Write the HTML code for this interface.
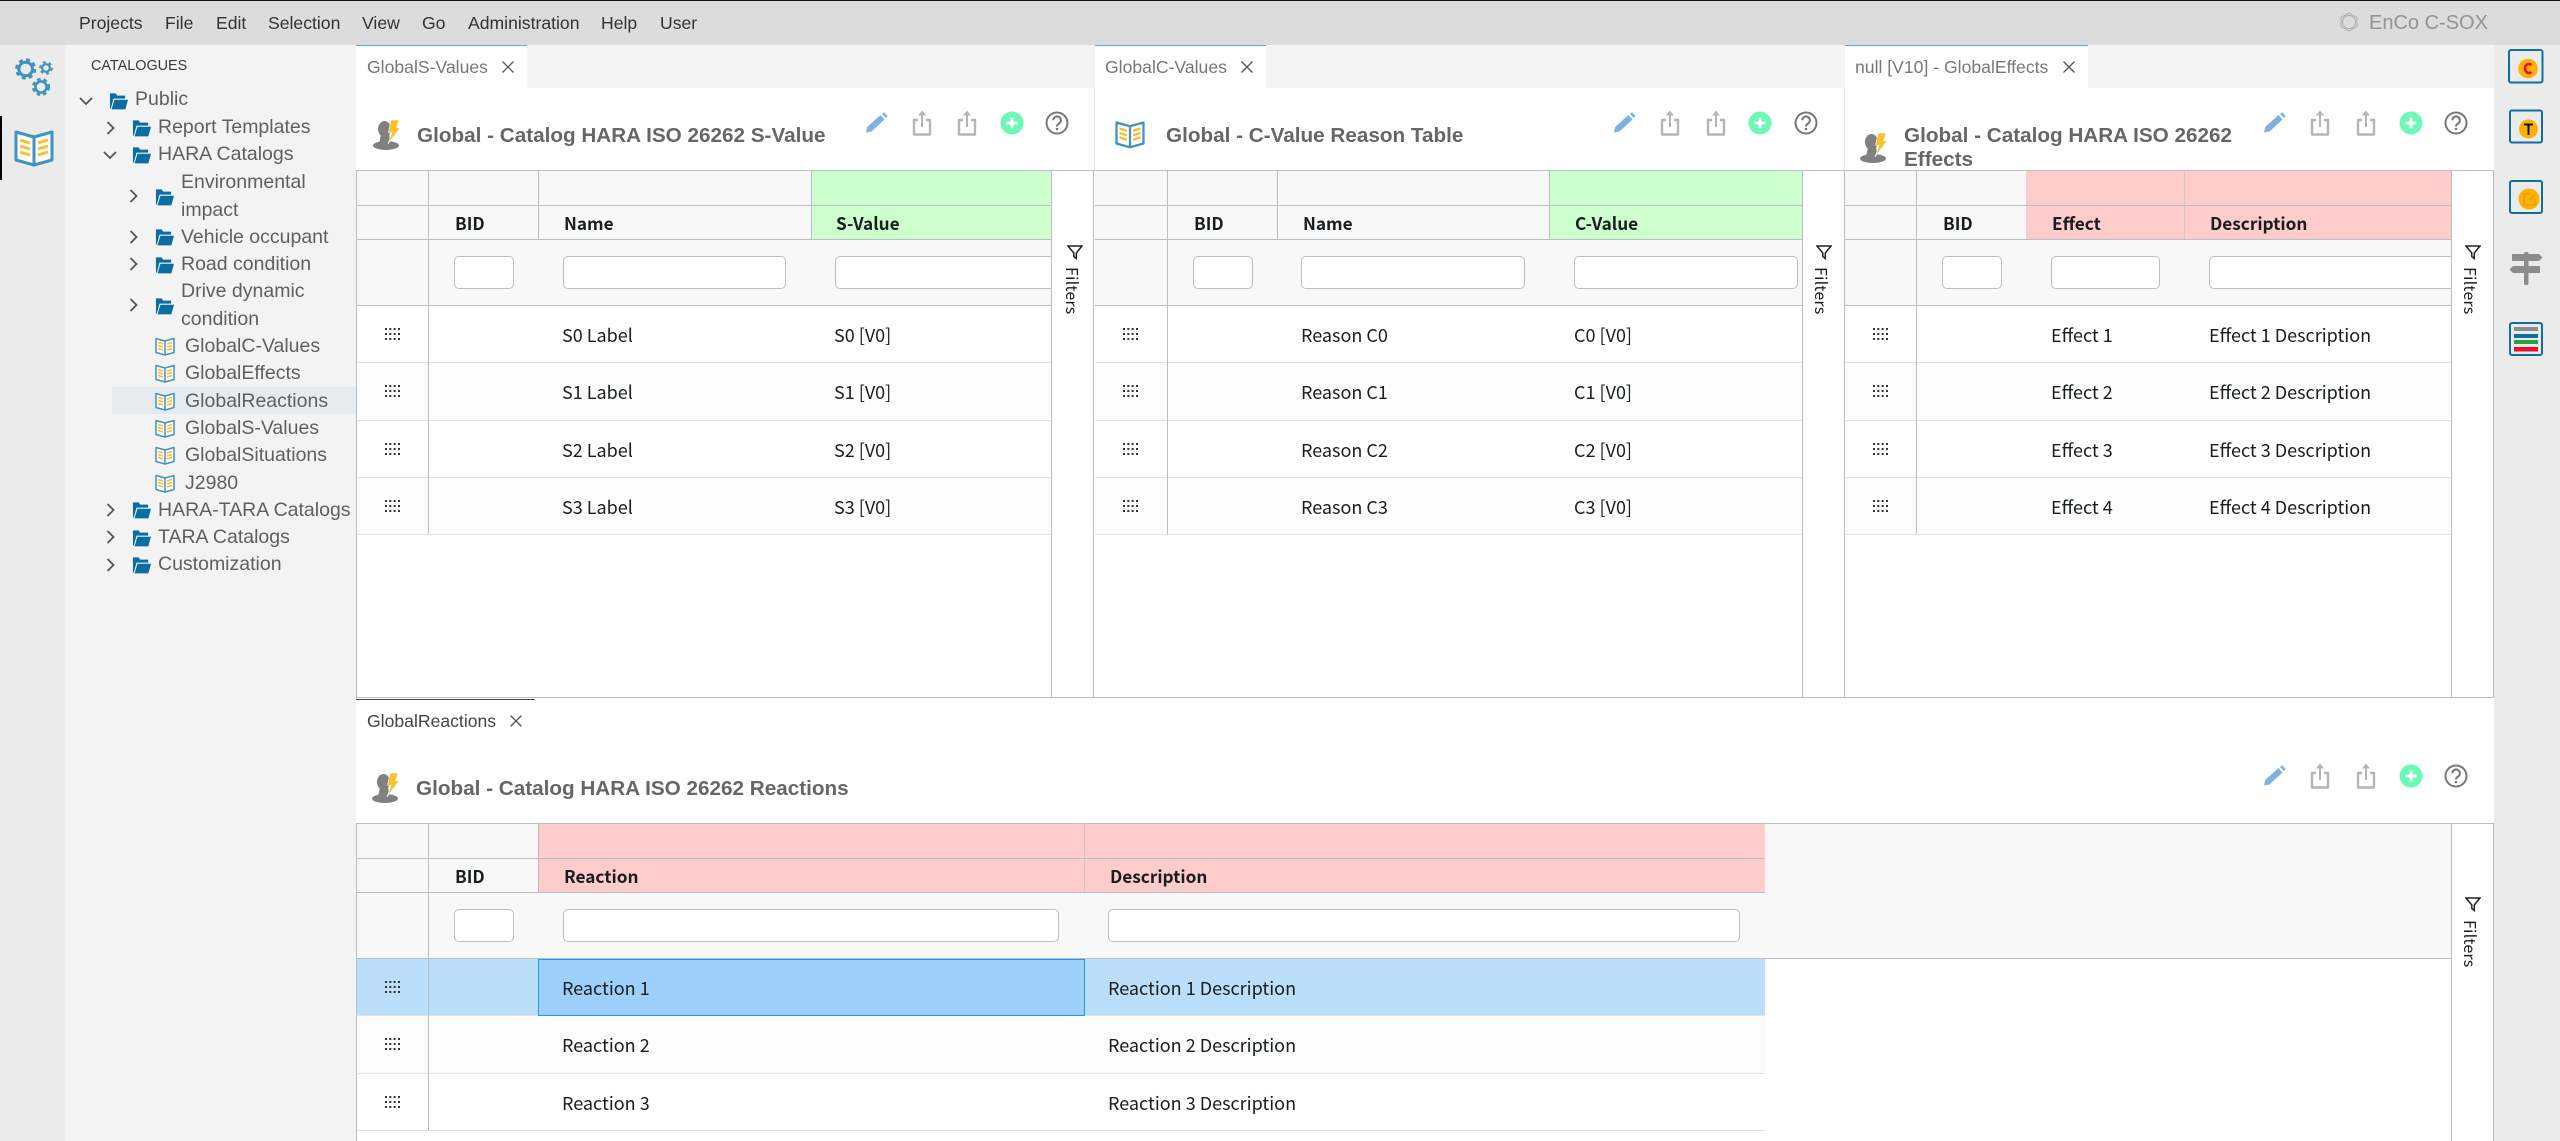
<!DOCTYPE html>
<html><head><meta charset="utf-8"><title>EnCo C-SOX</title>
<style>
html,body{margin:0;padding:0;width:2560px;height:1141px;overflow:hidden;background:#fff}
body{position:relative;font-family:"Liberation Sans",sans-serif}
div,span,svg{position:absolute}
svg{overflow:visible}
.m{top:11px;font-size:17.6px;line-height:24px;color:#333;white-space:nowrap}
.tr{font-size:19.5px;line-height:27px;color:#5f5f5f;white-space:nowrap}
.tb{font-size:17.6px;line-height:24px;color:#777;white-space:nowrap;top:55px}
.ti{font-size:20.7px;line-height:23px;font-weight:bold;color:#666;white-space:nowrap;transform:translateY(1px)}
.c{font-family:"Noto Sans CJK JP",sans-serif;font-size:18px;line-height:24px;color:#181d1f;white-space:nowrap}
.hd{font-family:"Noto Sans CJK JP",sans-serif;font-size:17.2px;line-height:24px;color:#181d1f;font-weight:700;white-space:nowrap;transform:translateY(-1px)}
.l{background:#babfc7}
.r{background:#dde2eb}
.z{background:#fcfcfc}
.i{background:#fff;border:1px solid #babfc7;border-radius:5px;box-sizing:border-box;height:33px}
.f{font-family:"Noto Sans CJK JP",sans-serif;font-size:16px;line-height:20px;color:#181d1f;writing-mode:vertical-rl;white-space:nowrap;letter-spacing:.2px}
</style></head><body>
<svg width="0" height="0" style="left:0;top:0">
<defs>
<symbol id="fo" viewBox="0 0 20 18"><path d="M1 17V1h6l1.600 2.300H17V6.500H4.700L1.900 17Z" fill="#0a6ea3"/><path d="M5.700 7.700H20L17.200 17.800H2.700Z" fill="#0a6ea3"/></symbol>
<symbol id="bk" viewBox="0 0 40 38"><path d="M2 3L20 8V36L2 31ZM38 3L20 8V36L38 31Z" fill="#fff" stroke="#3f93bd" stroke-width="3" stroke-linejoin="round"/><path d="M6 11l10 3M6 17l10 3M6 23l10 3M34 11l-10 3M34 17l-10 3M34 23l-10 3" stroke="#fbbd33" stroke-width="3" fill="none"/></symbol>
<symbol id="rt" viewBox="0 0 10 14"><path d="M1.500 1L7.500 7L1.500 13" fill="none" stroke="#555" stroke-width="1.800"/></symbol>
<symbol id="dn" viewBox="0 0 14 10"><path d="M1 2L7 8L13 2" fill="none" stroke="#555" stroke-width="1.800"/></symbol>
<symbol id="pn" viewBox="0 0 27 30"><ellipse cx="13" cy="25.500" rx="13" ry="4.500" fill="#808080"/><ellipse cx="11.500" cy="9" rx="6.500" ry="8" fill="#808080"/><path d="M8 14H16L18 24H6Z" fill="#808080"/><path d="M18 0H26L23.500 8H27L15 24L19 12.500H15.500Z" fill="#fbc02d" stroke="#fff" stroke-width=".6"/></symbol>
<symbol id="pc" viewBox="0 0 22 21"><path d="M0 20.500L1.200 15L14.500 3L18.500 7.500L5.500 19.500Z" fill="#7eb1e3"/><path d="M16 2L18 .3L21.700 4L19.800 6Z" fill="#7eb1e3"/></symbol>
<symbol id="sh" viewBox="0 0 20 26"><path d="M6 10H2V24.500H18V10H14" fill="none" stroke="#b5b5b5" stroke-width="2.400" stroke-linejoin="round"/><path d="M10 17V2" stroke="#b5b5b5" stroke-width="2" fill="none"/><path d="M6 5.500L10 .5L14 5.500Z" fill="#b5b5b5"/></symbol>
<symbol id="pl" viewBox="0 0 24 24"><circle cx="12" cy="12" r="11.500" fill="#6cf9b6"/><path d="M12 6.500V17.500M6.500 12H17.500" stroke="#fff" stroke-width="2.800"/></symbol>
<symbol id="hp" viewBox="0 0 24 24"><circle cx="12" cy="12" r="10.500" fill="none" stroke="#777" stroke-width="2"/><path d="M8.300 9.300a3.800 3.800 0 1 1 5.800 3.200c-1.500 1-2.100 1.500-2.100 3" fill="none" stroke="#777" stroke-width="2"/><circle cx="12" cy="18" r="1.300" fill="#777"/></symbol>
<symbol id="fn" viewBox="0 0 16 15"><path d="M1 1H15L9.300 8V13.500L6.800 11.500V8Z" fill="none" stroke="#222" stroke-width="1.500"/></symbol>
<symbol id="dg" viewBox="0 0 15 12"><g fill="#333"><rect x="0" y="0" width="2" height="2"/><rect x="4.300" y="0" width="2" height="2"/><rect x="8.600" y="0" width="2" height="2"/><rect x="13" y="0" width="2" height="2"/><rect x="0" y="5" width="2" height="2"/><rect x="4.300" y="5" width="2" height="2"/><rect x="8.600" y="5" width="2" height="2"/><rect x="13" y="5" width="2" height="2"/><rect x="0" y="10" width="2" height="2"/><rect x="4.300" y="10" width="2" height="2"/><rect x="8.600" y="10" width="2" height="2"/><rect x="13" y="10" width="2" height="2"/></g></symbol>
<symbol id="xx" viewBox="0 0 12 12"><path d="M.5 .5L11.500 11.500M11.500 .5L.5 11.500" stroke="#555" stroke-width="1.300" fill="none"/></symbol>
</defs></svg>

<!-- backgrounds -->
<div style="left:0;top:0;width:2560px;height:45px;background:#dcdcdc"></div>
<div style="left:0;top:0;width:2560px;height:1px;background:#111"></div>
<div style="left:0;top:45px;width:65px;height:1096px;background:#ebebeb"></div>
<div style="left:65px;top:45px;width:291px;height:1096px;background:#f3f3f3"></div>
<div style="left:2494px;top:45px;width:66px;height:1096px;background:#ebebeb"></div>
<div style="left:356px;top:45px;width:2138px;height:43px;background:#f3f3f3"></div>
<div style="left:0;top:116px;width:2px;height:64px;background:#000"></div>

<!-- menu -->
<span class="m" style="left:79px">Projects</span>
<span class="m" style="left:165px">File</span>
<span class="m" style="left:216px">Edit</span>
<span class="m" style="left:268px">Selection</span>
<span class="m" style="left:362px">View</span>
<span class="m" style="left:422px">Go</span>
<span class="m" style="left:468px">Administration</span>
<span class="m" style="left:601px">Help</span>
<span class="m" style="left:660px">User</span>
<svg style="left:2339px;top:12px" width="20" height="20" viewBox="0 0 20 20"><path d="M10 1L18 5.500V14.500L10 19L2 14.500V5.500Z" fill="none" stroke="#aaa" stroke-width="1"/><circle cx="10" cy="10" r="6.500" fill="none" stroke="#aaa" stroke-width="1"/></svg>
<span style="left:2369px;top:11px;font-size:20px;line-height:24px;color:#949494;white-space:nowrap">EnCo C-SOX</span>

<!-- left sidebar icons -->
<svg style="left:0;top:45px" width="65" height="60" viewBox="0 45 65 60" fill="none" stroke="#3f93bd">
<circle cx="25.700" cy="69" r="6.800" stroke-width="3"/><circle cx="25.700" cy="69" r="9.300" stroke-width="2.600" stroke-dasharray="4 3.300"/>
<circle cx="46" cy="68" r="3.800" stroke-width="2.200"/><circle cx="46" cy="68" r="5.800" stroke-width="2" stroke-dasharray="3 3"/>
<circle cx="41" cy="87" r="5.600" stroke-width="2.600"/><circle cx="41" cy="87" r="7.900" stroke-width="2.400" stroke-dasharray="3.600 3"/>
</svg>
<svg style="left:14px;top:129px" width="40" height="38"><use href="#bk" width="40" height="38"/></svg>

<!-- tree -->
<span style="left:91px;top:56px;font-size:14.4px;line-height:20px;color:#3a3a3a;white-space:nowrap">CATALOGUES</span>
<div style="left:112px;top:387px;width:244px;height:27px;background:#e6ebf0"></div>
<div style="left:0;top:1px">
<svg style="left:79px;top:95px" width="14" height="10"><use href="#dn" width="14" height="10"/></svg>
<svg style="left:106px;top:120px" width="10" height="14"><use href="#rt" width="10" height="14"/></svg>
<svg style="left:103px;top:149px" width="14" height="10"><use href="#dn" width="14" height="10"/></svg>
<svg style="left:129px;top:188px" width="10" height="14"><use href="#rt" width="10" height="14"/></svg>
<svg style="left:129px;top:229px" width="10" height="14"><use href="#rt" width="10" height="14"/></svg>
<svg style="left:129px;top:256px" width="10" height="14"><use href="#rt" width="10" height="14"/></svg>
<svg style="left:129px;top:297px" width="10" height="14"><use href="#rt" width="10" height="14"/></svg>
<svg style="left:106px;top:502px" width="10" height="14"><use href="#rt" width="10" height="14"/></svg>
<svg style="left:106px;top:529px" width="10" height="14"><use href="#rt" width="10" height="14"/></svg>
<svg style="left:106px;top:557px" width="10" height="14"><use href="#rt" width="10" height="14"/></svg>
<svg style="left:109px;top:91px" width="19" height="18"><use href="#fo" width="19" height="18"/></svg>
<svg style="left:132px;top:118px" width="19" height="18"><use href="#fo" width="19" height="18"/></svg>
<svg style="left:132px;top:145px" width="19" height="18"><use href="#fo" width="19" height="18"/></svg>
<svg style="left:155px;top:187px" width="19" height="18"><use href="#fo" width="19" height="18"/></svg>
<svg style="left:155px;top:227px" width="19" height="18"><use href="#fo" width="19" height="18"/></svg>
<svg style="left:155px;top:255px" width="19" height="18"><use href="#fo" width="19" height="18"/></svg>
<svg style="left:155px;top:296px" width="19" height="18"><use href="#fo" width="19" height="18"/></svg>
<svg style="left:132px;top:500px" width="19" height="18"><use href="#fo" width="19" height="18"/></svg>
<svg style="left:132px;top:528px" width="19" height="18"><use href="#fo" width="19" height="18"/></svg>
<svg style="left:132px;top:555px" width="19" height="18"><use href="#fo" width="19" height="18"/></svg>
<svg style="left:155px;top:336px" width="20" height="19"><use href="#bk" width="20" height="19"/></svg>
<svg style="left:155px;top:363px" width="20" height="19"><use href="#bk" width="20" height="19"/></svg>
<svg style="left:155px;top:391px" width="20" height="19"><use href="#bk" width="20" height="19"/></svg>
<svg style="left:155px;top:418px" width="20" height="19"><use href="#bk" width="20" height="19"/></svg>
<svg style="left:155px;top:445px" width="20" height="19"><use href="#bk" width="20" height="19"/></svg>
<svg style="left:155px;top:473px" width="20" height="19"><use href="#bk" width="20" height="19"/></svg>
<span class="tr" style="left:135px;top:85px">Public</span>
<span class="tr" style="left:158px;top:113px">Report Templates</span>
<span class="tr" style="left:158px;top:140px">HARA Catalogs</span>
<span class="tr" style="left:181px;top:168px">Environmental</span>
<span class="tr" style="left:181px;top:196px">impact</span>
<span class="tr" style="left:181px;top:223px">Vehicle occupant</span>
<span class="tr" style="left:181px;top:250px">Road condition</span>
<span class="tr" style="left:181px;top:277px">Drive dynamic</span>
<span class="tr" style="left:181px;top:305px">condition</span>
<span class="tr" style="left:185px;top:332px">GlobalC-Values</span>
<span class="tr" style="left:185px;top:359px">GlobalEffects</span>
<span class="tr" style="left:185px;top:387px">GlobalReactions</span>
<span class="tr" style="left:185px;top:414px">GlobalS-Values</span>
<span class="tr" style="left:185px;top:441px">GlobalSituations</span>
<span class="tr" style="left:185px;top:469px">J2980</span>
<span class="tr" style="left:158px;top:496px">HARA-TARA Catalogs</span>
<span class="tr" style="left:158px;top:523px">TARA Catalogs</span>
<span class="tr" style="left:158px;top:550px">Customization</span>
</div>

<!-- tabs -->
<div style="left:356px;top:45px;width:171px;height:43px;background:#fff;border-top:1px solid #5aa9e6;box-sizing:border-box"></div>
<div style="left:1095px;top:45px;width:171px;height:43px;background:#fff;border-top:1px solid #5aa9e6;box-sizing:border-box"></div>
<div style="left:1845px;top:45px;width:243px;height:43px;background:#fff;border-top:1px solid #5aa9e6;box-sizing:border-box"></div>
<span class="tb" style="left:367px">GlobalS-Values</span>
<svg style="left:502px;top:61px" width="12" height="12"><use href="#xx" width="12" height="12"/></svg>
<span class="tb" style="left:1105px">GlobalC-Values</span>
<svg style="left:1241px;top:61px" width="12" height="12"><use href="#xx" width="12" height="12"/></svg>
<span class="tb" style="left:1855px">null [V10] - GlobalEffects</span>
<svg style="left:2063px;top:61px" width="12" height="12"><use href="#xx" width="12" height="12"/></svg>
<div style="left:1094px;top:88px;width:1px;height:82px;background:#e4e4e4"></div>
<div style="left:1844px;top:88px;width:1px;height:82px;background:#e4e4e4"></div>

<!-- panel titles -->
<svg style="left:373px;top:120px" width="27" height="30"><use href="#pn" width="27" height="30"/></svg>
<span class="ti" style="left:417px;top:123px">Global - Catalog HARA ISO 26262 S-Value</span>
<svg style="left:1115px;top:120px" width="30" height="29"><use href="#bk" width="30" height="29"/></svg>
<span class="ti" style="left:1166px;top:123px">Global - C-Value Reason Table</span>
<svg style="left:1860px;top:133px" width="27" height="30"><use href="#pn" width="27" height="30"/></svg>
<span class="ti" style="left:1904px;top:123px">Global - Catalog HARA ISO 26262</span>
<span class="ti" style="left:1904px;top:147px">Effects</span>
<svg style="left:372px;top:773px" width="27" height="30"><use href="#pn" width="27" height="30"/></svg>
<span class="ti" style="left:416px;top:776px">Global - Catalog HARA ISO 26262 Reactions</span>

<!-- toolbars -->
<svg style="left:866px;top:112px" width="22" height="21"><use href="#pc" width="22" height="21"/></svg>
<svg style="left:912px;top:110px" width="20" height="26"><use href="#sh" width="20" height="26"/></svg>
<svg style="left:957px;top:110px" width="20" height="26"><use href="#sh" width="20" height="26"/></svg>
<svg style="left:1000px;top:111px" width="24" height="24"><use href="#pl" width="24" height="24"/></svg>
<svg style="left:1045px;top:111px" width="24" height="24"><use href="#hp" width="24" height="24"/></svg>
<svg style="left:1614px;top:112px" width="22" height="21"><use href="#pc" width="22" height="21"/></svg>
<svg style="left:1660px;top:110px" width="20" height="26"><use href="#sh" width="20" height="26"/></svg>
<svg style="left:1706px;top:110px" width="20" height="26"><use href="#sh" width="20" height="26"/></svg>
<svg style="left:1748px;top:111px" width="24" height="24"><use href="#pl" width="24" height="24"/></svg>
<svg style="left:1794px;top:111px" width="24" height="24"><use href="#hp" width="24" height="24"/></svg>
<svg style="left:2264px;top:112px" width="22" height="21"><use href="#pc" width="22" height="21"/></svg>
<svg style="left:2310px;top:110px" width="20" height="26"><use href="#sh" width="20" height="26"/></svg>
<svg style="left:2356px;top:110px" width="20" height="26"><use href="#sh" width="20" height="26"/></svg>
<svg style="left:2399px;top:111px" width="24" height="24"><use href="#pl" width="24" height="24"/></svg>
<svg style="left:2444px;top:111px" width="24" height="24"><use href="#hp" width="24" height="24"/></svg>
<svg style="left:2264px;top:765px" width="22" height="21"><use href="#pc" width="22" height="21"/></svg>
<svg style="left:2310px;top:763px" width="20" height="26"><use href="#sh" width="20" height="26"/></svg>
<svg style="left:2356px;top:763px" width="20" height="26"><use href="#sh" width="20" height="26"/></svg>
<svg style="left:2399px;top:764px" width="24" height="24"><use href="#pl" width="24" height="24"/></svg>
<svg style="left:2444px;top:764px" width="24" height="24"><use href="#hp" width="24" height="24"/></svg>

<!-- PANEL 1 grid -->
<div style="left:357px;top:171px;width:694px;height:134px;background:#f8f8f8"></div>
<div style="left:812px;top:171px;width:239px;height:68px;background:#ccffcc"></div>
<div class="z" style="left:357px;top:363px;width:694px;height:57px"></div>
<div class="z" style="left:357px;top:478px;width:694px;height:56px"></div>
<div class="r" style="left:357px;top:362px;width:694px;height:1px"></div>
<div class="r" style="left:357px;top:420px;width:694px;height:1px"></div>
<div class="r" style="left:357px;top:477px;width:694px;height:1px"></div>
<div class="r" style="left:357px;top:534px;width:694px;height:1px"></div>
<div class="l" style="left:356px;top:170px;width:738px;height:1px"></div>
<div class="l" style="left:356px;top:205px;width:695px;height:1px"></div>
<div class="l" style="left:356px;top:239px;width:695px;height:1px"></div>
<div class="l" style="left:356px;top:305px;width:695px;height:1px"></div>
<div class="l" style="left:356px;top:697px;width:738px;height:1px"></div>
<div class="l" style="left:356px;top:170px;width:1px;height:528px"></div>
<div class="l" style="left:428px;top:170px;width:1px;height:364px"></div>
<div class="l" style="left:538px;top:171px;width:1px;height:68px"></div>
<div class="l" style="left:811px;top:171px;width:1px;height:68px"></div>
<div class="l" style="left:1051px;top:170px;width:1px;height:528px"></div>
<div class="l" style="left:1093px;top:170px;width:1px;height:528px"></div>
<span class="hd" style="left:455px;top:212px">BID</span>
<span class="hd" style="left:564px;top:212px">Name</span>
<span class="hd" style="left:836px;top:212px">S-Value</span>
<div class="i" style="left:454px;top:256px;width:60px"></div>
<div class="i" style="left:563px;top:256px;width:223px"></div>
<div class="i" style="left:835px;top:256px;width:216px;border-right:0;border-radius:5px 0 0 5px"></div>
<span class="c" style="left:562px;top:323px">S0 Label</span><span class="c" style="left:834px;top:323px">S0 [V0]</span>
<span class="c" style="left:562px;top:380px">S1 Label</span><span class="c" style="left:834px;top:380px">S1 [V0]</span>
<span class="c" style="left:562px;top:438px">S2 Label</span><span class="c" style="left:834px;top:438px">S2 [V0]</span>
<span class="c" style="left:562px;top:495px">S3 Label</span><span class="c" style="left:834px;top:495px">S3 [V0]</span>
<svg style="left:385px;top:328px" width="15" height="12"><use href="#dg" width="15" height="12"/></svg>
<svg style="left:385px;top:385px" width="15" height="12"><use href="#dg" width="15" height="12"/></svg>
<svg style="left:385px;top:443px" width="15" height="12"><use href="#dg" width="15" height="12"/></svg>
<svg style="left:385px;top:500px" width="15" height="12"><use href="#dg" width="15" height="12"/></svg>
<svg style="left:1067px;top:245px" width="16" height="15"><use href="#fn" width="16" height="15"/></svg>
<span class="f" style="left:1063px;top:267px">Filters</span>

<!-- PANEL 2 grid -->
<div style="left:1095px;top:171px;width:707px;height:134px;background:#f8f8f8"></div>
<div style="left:1549px;top:171px;width:253px;height:68px;background:#ccffcc"></div>
<div class="z" style="left:1095px;top:363px;width:707px;height:57px"></div>
<div class="z" style="left:1095px;top:478px;width:707px;height:56px"></div>
<div class="r" style="left:1095px;top:362px;width:707px;height:1px"></div>
<div class="r" style="left:1095px;top:420px;width:707px;height:1px"></div>
<div class="r" style="left:1095px;top:477px;width:707px;height:1px"></div>
<div class="r" style="left:1095px;top:534px;width:707px;height:1px"></div>
<div class="l" style="left:1094px;top:170px;width:750px;height:1px"></div>
<div class="l" style="left:1095px;top:205px;width:707px;height:1px"></div>
<div class="l" style="left:1095px;top:239px;width:707px;height:1px"></div>
<div class="l" style="left:1095px;top:305px;width:707px;height:1px"></div>
<div class="l" style="left:1094px;top:697px;width:750px;height:1px"></div>
<div class="l" style="left:1167px;top:170px;width:1px;height:364px"></div>
<div class="l" style="left:1277px;top:171px;width:1px;height:68px"></div>
<div class="l" style="left:1549px;top:171px;width:1px;height:68px"></div>
<div class="l" style="left:1802px;top:170px;width:1px;height:528px"></div>
<div class="l" style="left:1844px;top:170px;width:1px;height:528px"></div>
<span class="hd" style="left:1194px;top:212px">BID</span>
<span class="hd" style="left:1303px;top:212px">Name</span>
<span class="hd" style="left:1575px;top:212px">C-Value</span>
<div class="i" style="left:1193px;top:256px;width:60px"></div>
<div class="i" style="left:1301px;top:256px;width:224px"></div>
<div class="i" style="left:1574px;top:256px;width:224px"></div>
<span class="c" style="left:1301px;top:323px">Reason C0</span><span class="c" style="left:1574px;top:323px">C0 [V0]</span>
<span class="c" style="left:1301px;top:380px">Reason C1</span><span class="c" style="left:1574px;top:380px">C1 [V0]</span>
<span class="c" style="left:1301px;top:438px">Reason C2</span><span class="c" style="left:1574px;top:438px">C2 [V0]</span>
<span class="c" style="left:1301px;top:495px">Reason C3</span><span class="c" style="left:1574px;top:495px">C3 [V0]</span>
<svg style="left:1123px;top:328px" width="15" height="12"><use href="#dg" width="15" height="12"/></svg>
<svg style="left:1123px;top:385px" width="15" height="12"><use href="#dg" width="15" height="12"/></svg>
<svg style="left:1123px;top:443px" width="15" height="12"><use href="#dg" width="15" height="12"/></svg>
<svg style="left:1123px;top:500px" width="15" height="12"><use href="#dg" width="15" height="12"/></svg>
<svg style="left:1816px;top:245px" width="16" height="15"><use href="#fn" width="16" height="15"/></svg>
<span class="f" style="left:1812px;top:267px">Filters</span>

<!-- PANEL 3 grid -->
<div style="left:1845px;top:171px;width:606px;height:134px;background:#f8f8f8"></div>
<div style="left:2026px;top:171px;width:425px;height:68px;background:#ffcccc"></div>
<div class="z" style="left:1845px;top:363px;width:606px;height:57px"></div>
<div class="z" style="left:1845px;top:478px;width:606px;height:56px"></div>
<div class="r" style="left:1845px;top:362px;width:606px;height:1px"></div>
<div class="r" style="left:1845px;top:420px;width:606px;height:1px"></div>
<div class="r" style="left:1845px;top:477px;width:606px;height:1px"></div>
<div class="r" style="left:1845px;top:534px;width:606px;height:1px"></div>
<div class="l" style="left:1844px;top:170px;width:650px;height:1px"></div>
<div class="l" style="left:1845px;top:205px;width:606px;height:1px"></div>
<div class="l" style="left:1845px;top:239px;width:606px;height:1px"></div>
<div class="l" style="left:1845px;top:305px;width:606px;height:1px"></div>
<div class="l" style="left:1844px;top:697px;width:650px;height:1px"></div>
<div class="l" style="left:1916px;top:170px;width:1px;height:364px"></div>
<div style="left:2184px;top:171px;width:1px;height:68px;background:#d4c4c6"></div>
<div class="l" style="left:2451px;top:170px;width:1px;height:528px"></div>
<div class="l" style="left:2493px;top:170px;width:1px;height:528px"></div>
<span class="hd" style="left:1943px;top:212px">BID</span>
<span class="hd" style="left:2052px;top:212px">Effect</span>
<span class="hd" style="left:2210px;top:212px">Description</span>
<div class="i" style="left:1942px;top:256px;width:60px"></div>
<div class="i" style="left:2051px;top:256px;width:109px"></div>
<div class="i" style="left:2209px;top:256px;width:242px;border-right:0;border-radius:5px 0 0 5px"></div>
<span class="c" style="left:2051px;top:323px">Effect 1</span><span class="c" style="left:2209px;top:323px">Effect 1 Description</span>
<span class="c" style="left:2051px;top:380px">Effect 2</span><span class="c" style="left:2209px;top:380px">Effect 2 Description</span>
<span class="c" style="left:2051px;top:438px">Effect 3</span><span class="c" style="left:2209px;top:438px">Effect 3 Description</span>
<span class="c" style="left:2051px;top:495px">Effect 4</span><span class="c" style="left:2209px;top:495px">Effect 4 Description</span>
<svg style="left:1873px;top:328px" width="15" height="12"><use href="#dg" width="15" height="12"/></svg>
<svg style="left:1873px;top:385px" width="15" height="12"><use href="#dg" width="15" height="12"/></svg>
<svg style="left:1873px;top:443px" width="15" height="12"><use href="#dg" width="15" height="12"/></svg>
<svg style="left:1873px;top:500px" width="15" height="12"><use href="#dg" width="15" height="12"/></svg>
<svg style="left:2465px;top:245px" width="16" height="15"><use href="#fn" width="16" height="15"/></svg>
<span class="f" style="left:2461px;top:267px">Filters</span>

<!-- BOTTOM panel -->
<div style="left:356px;top:699px;width:179px;height:1px;background:#444"></div>
<span class="tb" style="left:367px;top:709px;color:#444">GlobalReactions</span>
<svg style="left:510px;top:715px" width="12" height="12"><use href="#xx" width="12" height="12"/></svg>
<div style="left:357px;top:824px;width:2094px;height:134px;background:#f8f8f8"></div>
<div style="left:539px;top:824px;width:1226px;height:68px;background:#ffcccc"></div>
<div style="left:357px;top:959px;width:1408px;height:56px;background:#bbdefb"></div>
<div style="left:538px;top:959px;width:547px;height:57px;background:#9dcffb;border:1px solid #2196f3;box-sizing:border-box"></div>
<div class="z" style="left:357px;top:1016px;width:1408px;height:57px"></div>
<div class="r" style="left:357px;top:1015px;width:181px;height:1px"></div>
<div class="r" style="left:1085px;top:1015px;width:680px;height:1px"></div>
<div class="r" style="left:357px;top:1073px;width:1408px;height:1px"></div>
<div class="r" style="left:357px;top:1130px;width:1408px;height:1px"></div>
<div class="l" style="left:356px;top:823px;width:2138px;height:1px"></div>
<div class="l" style="left:357px;top:858px;width:1408px;height:1px"></div>
<div class="l" style="left:357px;top:892px;width:1408px;height:1px"></div>
<div class="l" style="left:356px;top:958px;width:2095px;height:1px"></div>
<div class="l" style="left:356px;top:823px;width:1px;height:318px"></div>
<div class="l" style="left:428px;top:823px;width:1px;height:307px"></div>
<div class="l" style="left:538px;top:824px;width:1px;height:68px"></div>
<div style="left:1084px;top:824px;width:1px;height:68px;background:#d4c4c6"></div>
<div class="l" style="left:2451px;top:823px;width:1px;height:318px"></div>
<div class="l" style="left:2493px;top:823px;width:1px;height:318px"></div>
<span class="hd" style="left:455px;top:865px">BID</span>
<span class="hd" style="left:564px;top:865px">Reaction</span>
<span class="hd" style="left:1110px;top:865px">Description</span>
<div class="i" style="left:454px;top:909px;width:60px"></div>
<div class="i" style="left:563px;top:909px;width:496px"></div>
<div class="i" style="left:1108px;top:909px;width:632px"></div>
<span class="c" style="left:562px;top:976px">Reaction 1</span><span class="c" style="left:1108px;top:976px">Reaction 1 Description</span>
<span class="c" style="left:562px;top:1033px">Reaction 2</span><span class="c" style="left:1108px;top:1033px">Reaction 2 Description</span>
<span class="c" style="left:562px;top:1091px">Reaction 3</span><span class="c" style="left:1108px;top:1091px">Reaction 3 Description</span>
<svg style="left:385px;top:981px" width="15" height="12"><use href="#dg" width="15" height="12"/></svg>
<svg style="left:385px;top:1038px" width="15" height="12"><use href="#dg" width="15" height="12"/></svg>
<svg style="left:385px;top:1096px" width="15" height="12"><use href="#dg" width="15" height="12"/></svg>
<svg style="left:2465px;top:897px" width="16" height="15"><use href="#fn" width="16" height="15"/></svg>
<span class="f" style="left:2461px;top:920px">Filters</span>

<!-- right sidebar -->
<svg style="left:2494px;top:45px" width="66" height="320" viewBox="2494 45 66 320">
<rect x="2509" y="50" width="33.500" height="32.500" rx="2" fill="none" stroke="#0d6f9e" stroke-width="2"/><circle cx="2528" cy="68.500" r="9.800" fill="#fdb100"/><path d="M2531.500 65a4 4.500 0 1 0 0 7" fill="none" stroke="#e8102a" stroke-width="2.600"/>
<rect x="2510" y="110.500" width="32" height="32" rx="2" fill="none" stroke="#0d6f9e" stroke-width="2"/><circle cx="2528.500" cy="129" r="9.500" fill="#fdb100"/><path d="M2524 124.500H2533M2528.500 124.500V135" fill="none" stroke="#111" stroke-width="2"/>
<rect x="2510" y="181" width="32" height="32" rx="2" fill="none" stroke="#0d6f9e" stroke-width="2"/><circle cx="2529" cy="199" r="10.500" fill="#fdb100"/><path d="M2530 194h-6v11h11v-6M2529 200l6-6" fill="none" stroke="#e89a00" stroke-width="1.200"/>
<path d="M2512 254h27l3.500 3.500-3.500 3.500h-27ZM2513 266h27v7h-27l-3.500-3.500Z" fill="#8c8c8c"/><rect x="2524" y="252" width="4.500" height="33" rx="1.500" fill="#8c8c8c"/>
<rect x="2510" y="323" width="32" height="32" rx="2" fill="none" stroke="#0d6f9e" stroke-width="2"/><rect x="2514" y="327" width="24" height="4" fill="#8c8c8c"/><rect x="2514" y="334" width="24" height="4" fill="#0d6f9e"/><rect x="2514" y="340" width="24" height="4" fill="#27a243"/><rect x="2514" y="347" width="24" height="4.500" fill="#e8102a"/>
</svg>
</body></html>
